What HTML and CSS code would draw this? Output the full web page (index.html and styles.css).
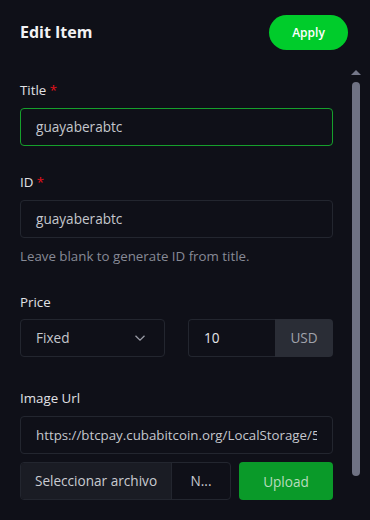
FILE: index.html
```html
<!DOCTYPE html>
<html lang="en">

<head>
  <meta charset="UTF-8">
  <meta name="viewport" content="width=device-width, initial-scale=1.0">
  <title>Edit Item</title>
  <link rel="stylesheet" href="styles.css">
</head>

<body>
  <div class="editor">
    <div class="editor-header">
      <h2>Edit Item</h2>
      <button class="btn btn-apply">Apply</button>
    </div>
    <div class="editor-body">
      <div class="form">
        <div class="form-group">
          <label>Title <span class="req">*</span></label>
          <div class="form-control focused">guayaberabtc</div>
        </div>
        <div class="form-group">
          <label>ID <span class="req">*</span></label>
          <div class="form-control">guayaberabtc</div>
          <p class="form-text">Leave blank to generate ID from title.</p>
        </div>
        <div class="form-group price">
          <label>Price</label>
          <div class="price-row">
            <div class="form-control select">
              <span>Fixed</span>
              <svg width="12" height="8" viewBox="0 0 12 8">
                <path d="M1.5 1.8 6 6.2 10.5 1.8" fill="none" stroke="#9a9ca6" stroke-width="1.3" />
              </svg>
            </div>
            <div class="input-group">
              <div class="form-control amount">10</div>
              <span class="addon">USD</span>
            </div>
          </div>
        </div>
        <div class="form-group">
          <label>Image Url</label>
          <div class="form-control url"><span class="url-text">https://btcpay.cubabitcoin.org/LocalStorage/5</span></div>
          <div class="file-row">
            <div class="file-input">
              <span class="file-btn">Seleccionar archivo</span>
              <span class="file-name">N...</span>
            </div>
            <button class="btn btn-upload">Upload</button>
          </div>
        </div>
      </div>
      <div class="scrollbar">
        <div class="arrow"></div>
        <div class="thumb"></div>
      </div>
    </div>
  </div>
</body>

</html>
```

FILE: styles.css
```css
* {
  box-sizing: border-box;
  padding: 0;
  margin: 0;
}

html,
body {
  width: 100%;
  height: 100%;
  overflow: hidden;
}

body {
  background-color: #0f1018;
  color: #e2e3e7;
  font-family: "Open Sans", "Noto Sans", sans-serif;
}

.editor-header {
  display: flex;
  justify-content: space-between;
  align-items: center;
  height: 63px;
  padding: 0 22px 0 20px;
}

.editor-header h2 {
  font-size: 16px;
  font-weight: 700;
  color: #f2f2f4;
}

.btn {
  border: none;
  font-family: inherit;
  cursor: pointer;
}

.btn-apply {
  width: 79px;
  height: 35px;
  border-radius: 18px;
  background-color: #00cc2b;
  color: #fff;
  font-size: 12px;
  font-weight: 600;
  margin-top: 1px;
}

.editor-body {
  display: flex;
  padding-left: 20px;
}

.form {
  width: 313px;
  padding-top: 17px;
}

.form-group {
  margin-bottom: 26px;
}

.form-group label {
  display: block;
  font-size: 13.3px;
  line-height: 20px;
  margin-bottom: 8px;
  color: #e0e1e5;
}

.req {
  color: #e3101a;
}

.form-control {
  height: 38px;
  border: 1px solid #23262f;
  border-radius: 4px;
  padding: 0 15px;
  font-size: 13.6px;
  line-height: 36px;
  color: #c5c7cd;
  white-space: nowrap;
  overflow: hidden;
}

.form-control.focused {
  border-color: #16a02c;
}

.form-text {
  font-size: 13.3px;
  line-height: 20px;
  margin-top: 8px;
  color: #878a96;
}

.price {
  margin-bottom: 31px;
}

.price label {
  margin-bottom: 7px;
}

.price-row {
  display: grid;
  grid-template-columns: 145px 145px;
  column-gap: 23px;
}

.select {
  display: flex;
  justify-content: space-between;
  align-items: center;
  padding-right: 18px;
}

.input-group {
  display: flex;
}

.input-group .amount {
  flex: 1;
  border-radius: 4px 0 0 4px;
  border-right: none;
  color: #e4e5e9;
}

.addon {
  width: 58px;
  height: 38px;
  background-color: #2a2d36;
  border-radius: 0 4px 4px 0;
  font-size: 13.6px;
  line-height: 38px;
  text-align: center;
  color: #a0a3ac;
}

.url {
  font-size: 13.3px;
}

.url-text {
  display: block;
  overflow: hidden;
}

.file-row {
  display: flex;
  gap: 8px;
  margin-top: 8px;
}

.file-input {
  display: flex;
  width: 211px;
  height: 38px;
  border: 1px solid #23262f;
  border-radius: 4px;
  overflow: hidden;
  font-size: 13.6px;
  line-height: 36px;
  color: #c9cbd1;
}

.file-btn {
  width: 151px;
  text-align: center;
  background-color: #1a1c24;
  border-right: 1px solid #23262f;
}

.file-name {
  flex: 1;
  text-align: center;
}

.btn-upload {
  width: 94px;
  height: 38px;
  border-radius: 4px;
  background-color: #0a9a29;
  color: #b8dcbe;
  font-size: 13.6px;
}

.scrollbar {
  width: 10px;
  margin-left: 18px;
  padding-top: 7px;
  display: flex;
  flex-direction: column;
  align-items: center;
}

.arrow {
  width: 0;
  height: 0;
  border-left: 5px solid transparent;
  border-right: 5px solid transparent;
  border-bottom: 5px solid #747789;
}

.thumb {
  width: 8px;
  height: 394px;
  margin-top: 7px;
  border-radius: 4px;
  background-color: #6f7283;
}
```
